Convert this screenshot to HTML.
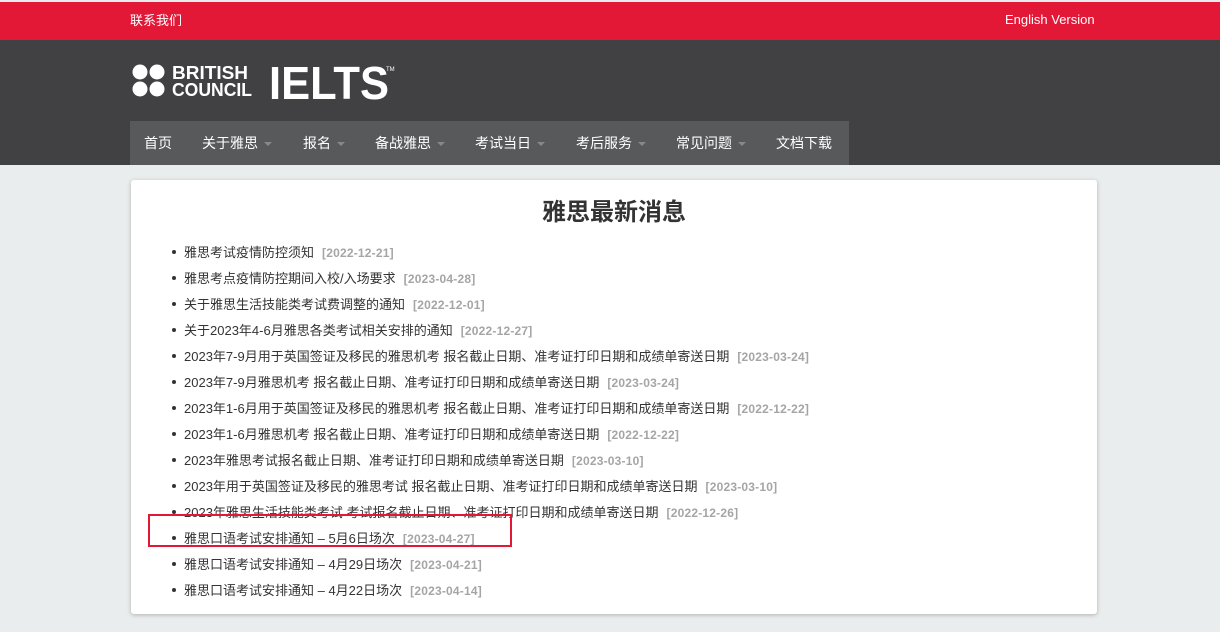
<!DOCTYPE html>
<html><head><meta charset="utf-8"><style>
*{margin:0;padding:0;box-sizing:border-box}
body{width:1220px;height:632px;overflow:hidden;background:#eaeded;font-family:"Liberation Sans","Noto Sans CJK SC",sans-serif;position:relative}
.top{position:absolute;top:2px;left:0;width:1220px;height:38px;background:#e31837;color:#fff;font-size:13px}
.top .l{position:absolute;left:130px;top:8px}
.top .r{position:absolute;left:1005px;top:10px}
.hd{position:absolute;top:40px;left:0;width:1220px;height:125px;background:#414143}
.nav{position:absolute;left:130px;top:81px;width:719px;height:44px;background:#58595b;color:#fff;font-size:14px}
.nav span{position:absolute;top:12px}
.nav i{display:inline-block;width:0;height:0;border-left:4px solid transparent;border-right:4px solid transparent;border-top:4px solid #888;margin-left:6px;vertical-align:middle}
.card{position:absolute;left:131px;top:180px;width:966px;height:434px;background:#fff;border-radius:3px;box-shadow:0 1px 4px rgba(0,0,0,.25)}
h1{position:absolute;top:12px;left:0;width:966px;text-align:center;font-size:24px;color:#333;font-weight:bold}
ul{position:absolute;left:53px;top:62px;list-style:none}
li{height:26px;font-size:13px;color:#333;position:relative;white-space:nowrap}
li:before{content:"";position:absolute;left:-12px;top:8px;width:4px;height:4px;border-radius:50%;background:#333}
li em{font-style:normal;color:#a5a5a5;font-size:12px;margin-left:8px;font-weight:bold;letter-spacing:.2px}
.box{position:absolute;left:148px;top:514px;width:364px;height:33px;border:2px solid #e31837}
</style></head><body>
<div class="top"><span class="l">联系我们</span><span class="r">English Version</span></div>
<div class="hd">
<svg style="position:absolute;left:132px;top:24px" width="270" height="38">
<circle cx="8" cy="8" r="7.5" fill="#fff"/><circle cx="25" cy="8" r="7.5" fill="#fff"/><circle cx="8" cy="25" r="7.5" fill="#fff"/><circle cx="25" cy="25" r="7.5" fill="#fff"/>
<text x="40" y="15" font-family="Liberation Sans" font-weight="bold" font-size="18" fill="#fff" textLength="76" lengthAdjust="spacingAndGlyphs">BRITISH</text>
<text x="40" y="32" font-family="Liberation Sans" font-weight="bold" font-size="18" fill="#fff" textLength="80" lengthAdjust="spacingAndGlyphs">COUNCIL</text>
<text x="137" y="35" font-family="Liberation Sans" font-weight="bold" font-size="46" fill="#fff" textLength="120" lengthAdjust="spacingAndGlyphs">IELTS</text>
<text x="254" y="7" font-family="Liberation Sans" font-size="6" fill="#fff">TM</text>
</svg>
<div class="nav">
<span style="left:14px">首页</span>
<span style="left:72px">关于雅思<i></i></span>
<span style="left:173px">报名<i></i></span>
<span style="left:245px">备战雅思<i></i></span>
<span style="left:345px">考试当日<i></i></span>
<span style="left:446px">考后服务<i></i></span>
<span style="left:546px">常见问题<i></i></span>
<span style="left:646px">文档下载</span>
</div></div>
<div class="card"><h1>雅思最新消息</h1>
<ul>
<li>雅思考试疫情防控须知<em>[2022-12-21]</em></li>
<li>雅思考点疫情防控期间入校/入场要求<em>[2023-04-28]</em></li>
<li>关于雅思生活技能类考试费调整的通知<em>[2022-12-01]</em></li>
<li>关于2023年4-6月雅思各类考试相关安排的通知<em>[2022-12-27]</em></li>
<li>2023年7-9月用于英国签证及移民的雅思机考 报名截止日期、准考证打印日期和成绩单寄送日期<em>[2023-03-24]</em></li>
<li>2023年7-9月雅思机考 报名截止日期、准考证打印日期和成绩单寄送日期<em>[2023-03-24]</em></li>
<li>2023年1-6月用于英国签证及移民的雅思机考 报名截止日期、准考证打印日期和成绩单寄送日期<em>[2022-12-22]</em></li>
<li>2023年1-6月雅思机考 报名截止日期、准考证打印日期和成绩单寄送日期<em>[2022-12-22]</em></li>
<li>2023年雅思考试报名截止日期、准考证打印日期和成绩单寄送日期<em>[2023-03-10]</em></li>
<li>2023年用于英国签证及移民的雅思考试 报名截止日期、准考证打印日期和成绩单寄送日期<em>[2023-03-10]</em></li>
<li>2023年雅思生活技能类考试 考试报名截止日期、准考证打印日期和成绩单寄送日期<em>[2022-12-26]</em></li>
<li>雅思口语考试安排通知 – 5月6日场次<em>[2023-04-27]</em></li>
<li>雅思口语考试安排通知 – 4月29日场次<em>[2023-04-21]</em></li>
<li>雅思口语考试安排通知 – 4月22日场次<em>[2023-04-14]</em></li>
</ul></div>
<div class="box"></div>
</body></html>
